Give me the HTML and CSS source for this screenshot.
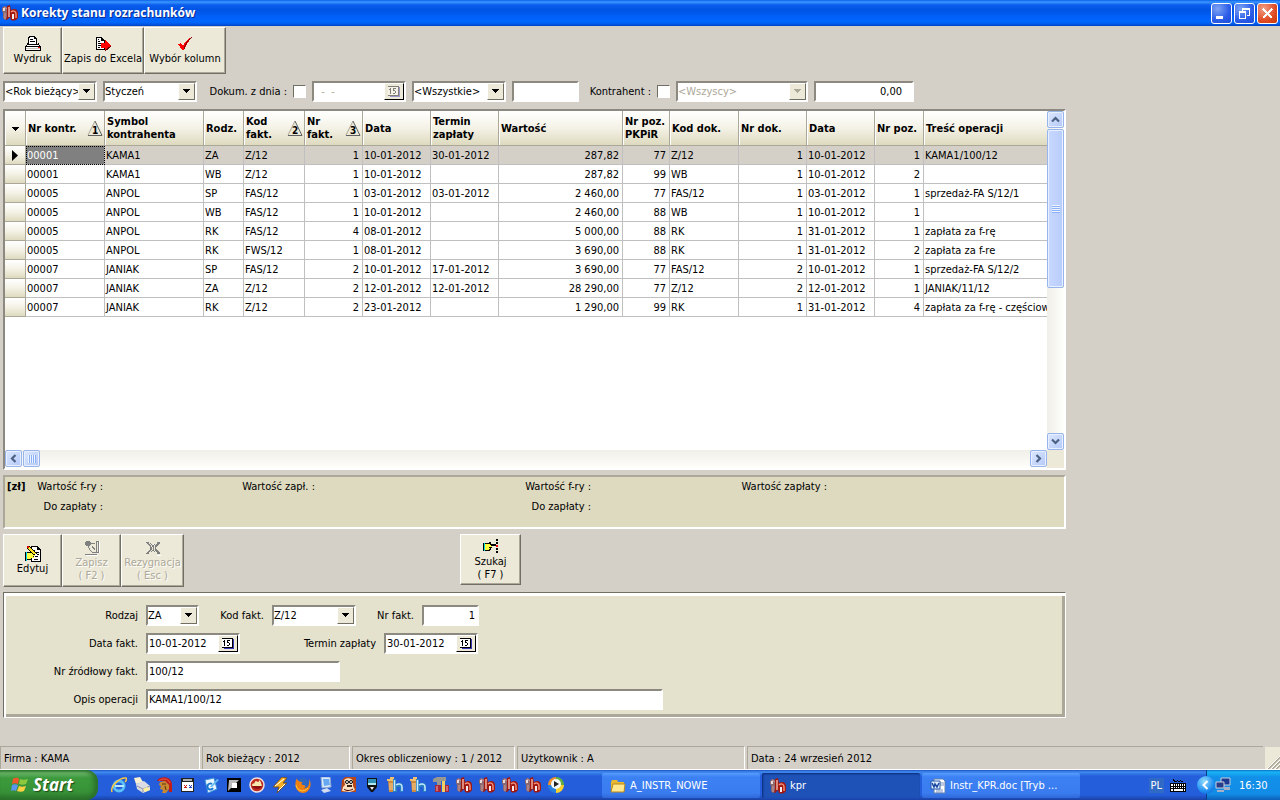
FILE: index.html
```html
<!DOCTYPE html>
<html lang="pl">
<head>
  <meta charset="UTF-8">
  <title>Korekty stanu rozrachunków</title>
  <link rel="stylesheet" href="styles.css">
</head>
<body>
  <svg class="defs" aria-hidden="true">
    <symbol id="i-kpr" viewBox="0 0 16 16">
      <path d="M0 3l2-2 3 1 1 3-1 3v6l-2 1-2-2V8L0 6z" fill="#8c6a70"/>
      <path d="M1 3h2v3H1z" fill="#e8dcdc"/>
      <path d="M3 8v6M2 2l3 2" stroke="#d09898" fill="none"/>
      <path d="M5 1l3-1 1 5c3-2 7-1 7 3v5c-2 3-5 3-7 2l-1-3-3 3H4l1-4z" fill="#a01810"/>
      <path d="M7 2v10" stroke="#f0b0a0" stroke-width="1.500"/>
      <path d="M9 7c2-2 5-1 5 2v4" fill="none" stroke="#f08c78" stroke-width="1.500"/>
      <path d="M10 9h2v5h-2z" fill="#f4ecec"/>
    </symbol>
    <symbol id="i-bh" viewBox="0 0 16 16">
      <path d="M1 3h8l-1 12H2z" fill="#d08a3c"/>
      <path d="M0 2h9v2H0zM3 0h4v2H3z" fill="#f0c070"/>
      <path d="M3 6v7M5 6v7" stroke="#f5cf94"/>
      <path d="M6 2h3v5c3-2 7-2 7 2v6h-3v-5h-3v5H6z" fill="#2a7fc0"/>
      <path d="M7.500 3v11M9 8c3-2 6-1 6 2v4" fill="none" stroke="#c8ecff" stroke-width="1.500"/>
    </symbol>
    <symbol id="i-cal" viewBox="0 0 14 13">
      <path d="M3 2h10v10H3z" fill="#3838b8"/>
      <path d="M1 1h10v9H1z" fill="#fff"/>
      <path d="M1 1h11v1H1zM1 10h11v1H1zM11 1h1v10h-1z" fill="#000"/>
      <path d="M3 3h1v6H3zM2 4h1v1H2zM6 3h3v1H6zM6 4h1v1H6zM6 5h2v1H6zM8 6h1v2H8zM6 8h2v1H6z" fill="#000"/>
    </symbol>
    <symbol id="i-down" viewBox="0 0 7 5"><path d="M0 0h7v1H0zM1 1h5v1H1zM2 2h3v1H2zM3 3h1v1H3z" fill="currentColor"/></symbol>
    <symbol id="i-chev" viewBox="0 0 9 9"><path d="M1 6.500L4.500 3L8 6.500" fill="none" stroke="#4d6185" stroke-width="2.200"/></symbol>
    <symbol id="i-tri" viewBox="0 0 16 17">
      <path d="M8 1L1 15h14z" fill="#ece9d8"/>
      <path d="M8 1L1 15" fill="none" stroke="#aca899"/>
      <path d="M8 1l7 14.500H1" fill="none" stroke="#606060"/>
    </symbol>
  </svg>

  <header class="titlebar">
    <svg class="ico"><use href="#i-kpr"/></svg>
    <h1>Korekty stanu rozrachunków</h1>
    <div class="win-buttons">
      <button class="win-btn" aria-label="Minimalizuj"><svg viewBox="0 0 19 19"><path d="M4 12h7v3H4z" fill="#fff"/></svg></button>
      <button class="win-btn" aria-label="Przywróć"><svg viewBox="0 0 19 19"><path d="M7 4h8v2H7zM14 6h1v6h-1zM12 11h2v1h-2zM7 6h1v1H7zM4 7h7v2H4zM4 9h1v6H4zM10 9h1v6h-1zM4 14h7v1H4z" fill="#fff"/></svg></button>
      <button class="win-btn win-close" aria-label="Zamknij"><svg viewBox="0 0 19 19"><path d="M5 5l9 9M14 5l-9 9" stroke="#fff" stroke-width="2.400"/></svg></button>
    </div>
  </header>

  <main>
    <div class="toolbar">
      <button class="tool t-small">
        <svg class="ico" viewBox="0 0 16 16"><path d="M4 0h6v1h1v1h1v6H3V1h1z" fill="#000"/><path d="M5 1h4v2h2v5H4V2h1z" fill="#fff"/><path d="M5 3h3v1H5zM5 5h5v1H5zM9 2h1v1H9z" fill="#000"/><path d="M2 7h1v1h10V7h1v2h1v1h1v5H0v-5h1V9h1z" fill="#000"/><path d="M2 9h12v1H2zM1 11h14v1H1zM1 13h14v1H1z" fill="#fff"/><path d="M1 12h14v1H1z" fill="#c8c4b8"/><path d="M13 11h2v1h-2z" fill="#f00"/></svg>
        Wydruk
      </button>
      <button class="tool t-wide">
        <svg class="ico" viewBox="0 0 16 16"><path d="M1 1h6v1h1v1h1v1h1v10H1z" fill="#000"/><path d="M2 2h4v3h3v8H2z" fill="#fff"/><path d="M3 3h1v1H3zM3 5h2v1H3zM3 7h3v1H3zM3 9h3v1H3zM3 11h2v1H3zM7 3h1v1H7z" fill="#000"/><path d="M6 7h4V4l6 6-6 5v-3H6z" fill="#f00"/><path d="M16 10l-6 5" stroke="#600"/></svg>
        Zapis do Excela
      </button>
      <button class="tool t-wide">
        <svg class="ico" viewBox="0 0 16 16"><path d="M1 8l3-1 2 3c2-4 5-8 9-9-3 3-6 8-8 13H5z" fill="#f00"/><path d="M15 1C10 5 8 9 7 13" stroke="#800" fill="none"/></svg>
        Wybór kolumn
      </button>
    </div>

    <form class="filters">
      <div class="combo c-std"><select aria-label="Rok"><option>&lt;Rok bieżący&gt;</option></select><span class="drop"><svg><use href="#i-down"/></svg></span></div>
      <div class="combo c-std"><select aria-label="Miesiąc"><option>Styczeń</option></select><span class="drop"><svg><use href="#i-down"/></svg></span></div>
      <label class="l-date" for="fDate">Dokum. z dnia :</label>
      <input type="checkbox" id="fDate">
      <div class="datebox off"><input type="text" value="  -  -" aria-label="Data dokumentu" disabled><button type="button" aria-label="Kalendarz" disabled><svg><use href="#i-cal"/></svg></button></div>
      <div class="combo c-std"><select aria-label="Rodzaj dokumentu"><option>&lt;Wszystkie&gt;</option></select><span class="drop"><svg><use href="#i-down"/></svg></span></div>
      <input class="field f-doc" type="text" aria-label="Numer dokumentu">
      <label class="l-contr" for="fContr">Kontrahent :</label>
      <input type="checkbox" id="fContr">
      <div class="combo c-contr off"><select aria-label="Kontrahent" disabled><option>&lt;Wszyscy&gt;</option></select><span class="drop"><svg><use href="#i-down"/></svg></span></div>
      <input class="field f-sum" type="text" value="0,00" aria-label="Kwota">
    </form>

    <section class="gridbox">
      <div class="grid-view">
        <table>
          <colgroup>
            <col class="w21"><col class="w79"><col class="w99"><col class="w40"><col class="w61"><col class="w58"><col class="w68"><col class="w68"><col class="w124"><col class="w47"><col class="w69"><col class="w68"><col class="w68"><col class="w49"><col>
          </colgroup>
          <thead>
            <tr>
              <th class="pick"><svg><use href="#i-down"/></svg></th>
              <th><div class="sort"><span>Nr kontr.</span><svg><use href="#i-tri"/><text x="5" y="14">1</text></svg></div></th>
              <th>Symbol<br>kontrahenta</th>
              <th>Rodz.</th>
              <th><div class="sort"><span>Kod<br>fakt.</span><svg><use href="#i-tri"/><text x="5" y="14">2</text></svg></div></th>
              <th><div class="sort"><span>Nr<br>fakt.</span><svg><use href="#i-tri"/><text x="5" y="14">3</text></svg></div></th>
              <th>Data</th>
              <th>Termin<br>zapłaty</th>
              <th>Wartość</th>
              <th>Nr poz.<br>PKPiR</th>
              <th>Kod dok.</th>
              <th>Nr dok.</th>
              <th>Data</th>
              <th>Nr poz.</th>
              <th>Treść operacji</th>
            </tr>
          </thead>
          <tbody>
            <tr class="current"><td class="pick"><svg viewBox="0 0 6 11"><path d="M0 0l6 5.500-6 5.500z"/></svg></td><td class="focus">00001</td><td>KAMA1</td><td>ZA</td><td>Z/12</td><td class="num">1</td><td>10-01-2012</td><td>30-01-2012</td><td class="num">287,82</td><td class="num">77</td><td>Z/12</td><td class="num">1</td><td>10-01-2012</td><td class="num">1</td><td>KAMA1/100/12</td></tr>
            <tr><td class="pick"></td><td>00001</td><td>KAMA1</td><td>WB</td><td>Z/12</td><td class="num">1</td><td>10-01-2012</td><td></td><td class="num">287,82</td><td class="num">99</td><td>WB</td><td class="num">1</td><td>10-01-2012</td><td class="num">2</td><td></td></tr>
            <tr><td class="pick"></td><td>00005</td><td>ANPOL</td><td>SP</td><td>FAS/12</td><td class="num">1</td><td>03-01-2012</td><td>03-01-2012</td><td class="num">2 460,00</td><td class="num">77</td><td>FAS/12</td><td class="num">1</td><td>03-01-2012</td><td class="num">1</td><td>sprzedaż-FA S/12/1</td></tr>
            <tr><td class="pick"></td><td>00005</td><td>ANPOL</td><td>WB</td><td>FAS/12</td><td class="num">1</td><td>10-01-2012</td><td></td><td class="num">2 460,00</td><td class="num">88</td><td>WB</td><td class="num">1</td><td>10-01-2012</td><td class="num">1</td><td></td></tr>
            <tr><td class="pick"></td><td>00005</td><td>ANPOL</td><td>RK</td><td>FAS/12</td><td class="num">4</td><td>08-01-2012</td><td></td><td class="num">5 000,00</td><td class="num">88</td><td>RK</td><td class="num">1</td><td>31-01-2012</td><td class="num">1</td><td>zapłata za f-rę</td></tr>
            <tr><td class="pick"></td><td>00005</td><td>ANPOL</td><td>RK</td><td>FWS/12</td><td class="num">1</td><td>08-01-2012</td><td></td><td class="num">3 690,00</td><td class="num">88</td><td>RK</td><td class="num">1</td><td>31-01-2012</td><td class="num">2</td><td>zapłata za f-re</td></tr>
            <tr><td class="pick"></td><td>00007</td><td>JANIAK</td><td>SP</td><td>FAS/12</td><td class="num">2</td><td>10-01-2012</td><td>17-01-2012</td><td class="num">3 690,00</td><td class="num">77</td><td>FAS/12</td><td class="num">2</td><td>10-01-2012</td><td class="num">1</td><td>sprzedaż-FA S/12/2</td></tr>
            <tr><td class="pick"></td><td>00007</td><td>JANIAK</td><td>ZA</td><td>Z/12</td><td class="num">2</td><td>12-01-2012</td><td>12-01-2012</td><td class="num">28 290,00</td><td class="num">77</td><td>Z/12</td><td class="num">2</td><td>12-01-2012</td><td class="num">1</td><td>JANIAK/11/12</td></tr>
            <tr><td class="pick"></td><td>00007</td><td>JANIAK</td><td>RK</td><td>Z/12</td><td class="num">2</td><td>23-01-2012</td><td></td><td class="num">1 290,00</td><td class="num">99</td><td>RK</td><td class="num">1</td><td>31-01-2012</td><td class="num">4</td><td>zapłata za f-rę - częściow</td></tr>
          </tbody>
        </table>
      </div>
      <div class="vscroll">
        <button class="sb" aria-label="W górę"><svg><use href="#i-chev"/></svg></button>
        <div class="thumb"><svg viewBox="0 0 8 8"><path d="M0 0h8v1H0zM0 2h8v1H0zM0 4h8v1H0zM0 6h8v1H0z" fill="#eef4fe"/><path d="M0 1h8v1H0zM0 3h8v1H0zM0 5h8v1H0zM0 7h8v1H0z" fill="#8cb0f8"/></svg></div>
        <button class="sb sb-end" aria-label="W dół"><svg class="r180"><use href="#i-chev"/></svg></button>
      </div>
      <div class="hscroll">
        <button class="sb" aria-label="W lewo"><svg class="r270"><use href="#i-chev"/></svg></button>
        <div class="thumb"><svg viewBox="0 0 8 8"><path d="M0 0v8h1V0zM2 0v8h1V0zM4 0v8h1V0zM6 0v8h1V0z" fill="#eef4fe"/><path d="M1 0v8h1V0zM3 0v8h1V0zM5 0v8h1V0zM7 0v8h1V0z" fill="#8cb0f8"/></svg></div>
        <button class="sb sb-end" aria-label="W prawo"><svg class="r90"><use href="#i-chev"/></svg></button>
      </div>
    </section>

    <section class="summary">
      <b>[zł]</b>
      <span>Wartość f-ry :<br>Do zapłaty :</span>
      <span>Wartość zapł. :</span>
      <span>Wartość f-ry :<br>Do zapłaty :</span>
      <span>Wartość zapłaty :</span>
    </section>

    <div class="actions">
      <button class="tool t-small">
        <svg class="ico" viewBox="0 0 16 16"><path d="M6 0h7v1h1v1h1v1h1v13H6z" fill="#000"/><path d="M7 1h5v3h3v11H7z" fill="#fff"/><path d="M8 4h2v1H8zM11 6h3v1h-3zM12 8h2v1h-2zM10 10h3v1h-3zM9 13h4v1H9zM13 2h1v1h-1z" fill="#000"/><path d="M1 6h3l2-1h3v1h3v2h-2v2h-1v2H7v2H1z" fill="#000"/><path d="M2 7h3l1-1h2v1h3v1H9v1h1v1H8v1h1v1H6v1H2z" fill="#ffff40"/><path d="M0 6h2v9H0z" fill="#00d8e8"/><path d="M0 6h1v9H0z" fill="#000"/><path d="M3 1l7 7" stroke="#000" stroke-width="3"/><path d="M4 2l6 6" stroke="#ffe020" stroke-width="1.500"/><path d="M2 0h2v2H2z" fill="#e00000"/></svg>
        Edytuj
      </button>
      <button class="tool t-small" disabled>
        <svg class="ico" viewBox="0 0 16 16"><path d="M2 1h4v1h1v2L5 6H2L1 5V2z" fill="#808080"/><path d="M6 4l5-1M12 1h2v11h-2M4 6l2 4 2 2h4M8 6l3 4M12 2v10" fill="none" stroke="#808080"/><path d="M1 14h12v1H1z" fill="#808080"/><path d="M2 15h12v1H2zM15 1h1v12h-1z" fill="#fff"/></svg>
        Zapisz<br>( F2 )
      </button>
      <button class="tool t-cancel" disabled>
        <svg class="ico" viewBox="0 0 16 16"><path d="M3 15l3-3M12 15h4M8 4v2" stroke="#fff" fill="none"/><path d="M1 2h4l3 4 3-4h4v1l-4 4v2l4 4v1h-4l-3-4-3 4H1v-1l4-4V7L1 3z" fill="#808080"/><path d="M4 2l3 5v3l-4 5M12 2L9 7v3l4 5" stroke="#ece9d8" fill="none"/></svg>
        Rezygnacja<br>( Esc )
      </button>
      <button class="tool t-find">
        <svg class="ico" viewBox="0 0 16 16"><path d="M1 4h4l2-1h1v2h5v2H9v2H8v2H7v1H1z" fill="#000"/><path d="M2 5h4l1-1v2h5v0H8v1h1v1H6v1h1v1H6v1H2z" fill="#ffff40"/><path d="M1 4h1v8H1z" fill="#00d8e8"/><path d="M0 4h1v8H0z" fill="#000"/><path d="M13 0h2v2h-2zM13 3h2v2h-2zM13 9h2v2h-2zM13 12h2v2h-2z" fill="#000"/><path d="M13 6h2v2h-2z" fill="#f00"/></svg>
        Szukaj<br>( F7 )
      </button>
    </div>

    <form class="details">
      <div class="row">
        <label class="l-first" for="kind">Rodzaj</label>
        <div class="combo d-kind"><select id="kind"><option>ZA</option></select><span class="drop"><svg><use href="#i-down"/></svg></span></div>
        <label class="l-code" for="code">Kod fakt.</label>
        <div class="combo d-code"><select id="code"><option>Z/12</option></select><span class="drop"><svg><use href="#i-down"/></svg></span></div>
        <label class="l-nr" for="nr">Nr fakt.</label>
        <input class="field d-nr" id="nr" type="text" value="1">
      </div>
      <div class="row">
        <label class="l-first" for="issued">Data fakt.</label>
        <div class="datebox"><input id="issued" type="text" value="10-01-2012"><button type="button" aria-label="Kalendarz"><svg><use href="#i-cal"/></svg></button></div>
        <label class="l-due" for="due">Termin zapłaty</label>
        <div class="datebox"><input id="due" type="text" value="30-01-2012"><button type="button" aria-label="Kalendarz"><svg><use href="#i-cal"/></svg></button></div>
      </div>
      <div class="row">
        <label class="l-first" for="source">Nr źródłowy fakt.</label>
        <input class="field d-source" id="source" type="text" value="100/12">
      </div>
      <div class="row">
        <label class="l-first" for="descr">Opis operacji</label>
        <input class="field d-descr" id="descr" type="text" value="KAMA1/100/12">
      </div>
    </form>
  </main>

  <footer class="status">
    <span class="st-firm">Firma : KAMA</span>
    <span class="st-year">Rok bieżący : 2012</span>
    <span class="st-period">Okres obliczeniowy : 1 / 2012</span>
    <span class="st-user">Użytkownik : A</span>
    <span class="st-date">Data : 24 wrzesień 2012</span>
    <svg class="grip" viewBox="0 0 15 22"><path d="M0 0h15v22H0z" fill="#ece9d8"/><path d="M3 22L15 10M7 22l8-8M11 22l4-4" stroke="#aca899" stroke-width="2"/><path d="M2 22L15 9M6 22l9-9M10 22l5-5" stroke="#fff"/></svg>
  </footer>

  <nav class="taskbar">
    <button class="start">
      <svg viewBox="0 0 18 18"><path d="M2 3c3-2 5-1 6 0L7 8C5 7 3 7 1 8z" fill="#f0582a"/><path d="M9 3c2 1 5 1 8 0l-2 5c-2 1-5 1-7 0z" fill="#8cc840"/><path d="M1 9c2-1 4-1 6 0l-2 6c-2-1-3-1-5 0z" fill="#5a96f0"/><path d="M8 10c2 1 4 1 7 0l-2 5c-2 1-5 1-7 0z" fill="#fcd040"/></svg>
      Start
    </button>
    <div class="quick">
      <a href="#" aria-label="Internet Explorer"><svg viewBox="0 0 16 16"><circle cx="8" cy="9" r="5" fill="none" stroke="#5cc0f8" stroke-width="3"/><path d="M4 9h9" stroke="#b8e8ff" stroke-width="2"/><path d="M1 15C-1 9 9 0 15 1c1 1 0 3-1 4" fill="none" stroke="#f8c840" stroke-width="1.500"/></svg></a>
      <a href="#" aria-label="Drukarka"><svg viewBox="0 0 16 16"><path d="M0 1l6-1 3 5-7 2z" fill="#f8f0d0"/><path d="M2 7l8-3 6 5v4l-7 3-6-4z" fill="#dcdce4"/><path d="M3 9l6 3 7-3M9 12v3" stroke="#8890a0" fill="none"/><path d="M9 12l4-2 3 3-5 2z" fill="#fff0a0"/></svg></a>
      <a href="#" aria-label="Spartan"><svg viewBox="0 0 16 16"><path d="M0 4c2-5 14-6 15 3v8h-3L11 7 6 4z" fill="#c01c18"/><path d="M3 5l5-1 4 4v4l-3 4H5l1-3-3-1 1-3-2-1z" fill="#c88830"/><path d="M5 7h4M8 9l1 4" stroke="#5c3008"/><path d="M2 4c3-3 9-3 11 2" stroke="#f06050" fill="none"/></svg></a>
      <a href="#" aria-label="Kalendarz"><svg viewBox="0 0 16 16"><path d="M1 1h13v14H1z" fill="#222"/><path d="M2 5h11v9H2z" fill="#fff"/><path d="M3 2h9v2H3z" fill="#b0b0b0"/><path d="M4 8h1v1H4zM6 8h1v1H6zM5 9h1v1H5zM4 10h3v1H4z" fill="#d02020"/><path d="M9 8h1v1H9zM11 8h1v1h-1zM10 9h1v1h-1zM9 10h3v1H9z" fill="#2040c0"/></svg></a>
      <a href="#" aria-label="Poczta"><svg viewBox="0 0 16 16"><path d="M2 3l9-2 3 11-9 4z" fill="#eaf6ff" stroke="#3a90d8"/><path d="M9 7a3 3 0 1 0 1 4" fill="none" stroke="#1878d0" stroke-width="2"/><path d="M7 10l7-8 2 1-7 7z" fill="#60b8f0"/></svg></a>
      <a href="#" aria-label="Total"><svg viewBox="0 0 16 16"><path d="M1 1h14v14H1z" fill="#000"/><path d="M3 3h10l-3 3v5H5l-3 3z" fill="#bbb"/><path d="M6 6h5v5H6z" fill="#fff"/></svg></a>
      <a href="#" aria-label="Nero"><svg viewBox="0 0 16 16"><circle cx="8" cy="8" r="7" fill="#c02c20" stroke="#f0e0e0" stroke-width="1.500"/><path d="M3 8c1-3 2 0 3-3s3 2 4-1 2 3 3 4c-1 4-9 4-10 0z" fill="#f8e8b0"/><path d="M3 9h10c-1 4-9 4-10 0z" fill="#901010"/></svg></a>
      <a href="#" aria-label="Winamp"><svg viewBox="0 0 16 16"><path d="M10 0l5 1-4 5h4L5 16l2-6H1z" fill="#f8b020" stroke="#705030"/><path d="M3 9l9-7M6 14l7-7" stroke="#fff"/></svg></a>
      <a href="#" aria-label="Firefox"><svg viewBox="0 0 16 16"><circle cx="8" cy="7" r="6" fill="#3068c0"/><path d="M2 1c-4 8 0 15 6 15s10-8 6-14c1 7-2 10-5 9 2-1 2-2 0-3-3 0-3-2-1-3-3 0-6-1-6-4z" fill="#f08010"/><path d="M1 8c1 6 8 8 12 3" stroke="#ffd040" fill="none"/></svg></a>
      <a href="#" aria-label="Pulpit"><svg viewBox="0 0 16 16"><path d="M3 0h9l1 10-9 1z" fill="#d8ecff" stroke="#90a8d0"/><path d="M5 2h6l1 6-6 1z" fill="#68a8f0"/><path d="M3 13l6-2 4 3-7 2z" fill="#d0dcf0"/></svg></a>
      <a href="#" aria-label="Gimp"><svg viewBox="0 0 16 16"><path d="M1 3l3-3h11v15H0z" fill="#b84818"/><path d="M3 3c3-3 8-2 9 1v5l2 4-5 2-8-1 1-4 2-2z" fill="#f8e0c0"/><circle cx="6" cy="5" r="1.500" fill="#fff" stroke="#000"/><circle cx="10" cy="5" r="1.500" fill="#fff" stroke="#000"/><path d="M6 8h5v2H6z" fill="#402010"/><path d="M3 12c2 2 6 2 9 0" stroke="#400" fill="none"/></svg></a>
      <a href="#" aria-label="Pióro"><svg viewBox="0 0 16 16"><path d="M3 1h10v9l-4 5H7l-4-5z" fill="#111"/><path d="M4 2h8v4H4z" fill="#3090b8"/><path d="M4 6h8v2H4z" fill="#b0e8f0"/><path d="M6 10h4l-2 3z" fill="#eee"/></svg></a>
      <a href="#" aria-label="BH 1"><svg><use href="#i-bh"/></svg></a>
      <a href="#" aria-label="BH 2"><svg><use href="#i-bh"/></svg></a>
      <a href="#" aria-label="Narzędzia"><svg viewBox="0 0 16 16"><path d="M0 2l4-2h9v4H8v10H4V5H0z" fill="#989890"/><path d="M2 8h6v7H2zM10 8h6v7h-6z" fill="#a82838"/><path d="M9 4h3v11H9z" fill="#f0d060"/><path d="M4 9v5M14 9v5" stroke="#f0b0b0"/></svg></a>
      <a href="#" aria-label="KPR 1"><svg><use href="#i-kpr"/></svg></a>
      <a href="#" aria-label="KPR 2"><svg><use href="#i-kpr"/></svg></a>
      <a href="#" aria-label="KPR 3"><svg><use href="#i-kpr"/></svg></a>
      <a href="#" aria-label="KPR 4"><svg><use href="#i-kpr"/></svg></a>
      <a href="#" aria-label="Odtwarzacz"><svg viewBox="0 0 16 16"><path d="M8 0a8 8 0 0 0-8 8h8z" fill="#f09028"/><path d="M8 0a8 8 0 0 1 8 8H8z" fill="#60b040"/><path d="M16 8a8 8 0 0 1-8 8V8z" fill="#f8d030"/><path d="M0 8a8 8 0 0 0 8 8V8z" fill="#2880e0"/><circle cx="8" cy="7" r="5" fill="#f4f8fc"/><path d="M6 4l5 3-5 3z" fill="#222"/></svg></a>
    </div>
    <div class="tasks">
      <button class="task"><svg class="ico" viewBox="0 0 16 16"><path d="M1 4l1-2h5l1 2h6v10H1z" fill="#e8b830"/><path d="M3 6h12l-1 8H1z" fill="#ffe890" stroke="#b88818"/></svg>A_INSTR_NOWE</button>
      <button class="task active"><svg class="ico"><use href="#i-kpr"/></svg>kpr</button>
      <button class="task"><svg class="ico" viewBox="0 0 16 16"><path d="M4 1h9l2 2v12H4z" fill="#fff" stroke="#6080b0"/><path d="M10 5h4M10 7h4M6 12h7M6 14h7" stroke="#7890c0"/><path d="M1 3h9v8H1z" fill="#e0ecff" stroke="#2858a8"/><path d="M2 5l2 4 1-3 2 3 2-4" fill="none" stroke="#1848a0" stroke-width="1.500"/></svg>Instr_KPR.doc [Tryb ...</button>
    </div>
    <div class="lang">
      <span>PL</span>
      <svg class="ico crisp" viewBox="0 0 16 16"><path d="M3 2h1v1h1v1h2V3h1v1h2V3h1v1h2v1h-2V4h-1v1H8V4H7v1H4V4H3zM0 6h16v9H0z" fill="#000"/><path d="M1 7h14v7H1z" fill="#fff"/><path d="M1 9h14v1H1zM1 11h14v1H1zM3 7h1v7H3zM5 7h1v5H5zM7 7h1v5H7zM9 7h1v5H9zM11 7h1v5h-1zM13 7h1v7h-1z" fill="#000"/></svg>
    </div>
    <div class="tray">
      <button class="expand" aria-label="Pokaż ukryte ikony"><svg viewBox="0 0 18 18"><path d="M10.500 5l-4 4 4 4" fill="none" stroke="#fff" stroke-width="2"/></svg></button>
      <svg class="ico" viewBox="0 0 16 16"><path d="M6 1h9v7H6z" fill="#1c3890" stroke="#c8d0e0"/><path d="M1 5h8v6H1z" fill="#283c88" stroke="#c8d0e0"/><path d="M9 10h6v3H9zM2 13h7v2H2z" fill="#a8b0c8"/></svg>
      <time>16:30</time>
    </div>
  </nav>
</body>
</html>
```
FILE: styles.css
```css
:root {
  --face: #d4d0c8;
  --cream: #ece9d8;
  --shade: #aca899;
  --dark: #716f64;
  --grid: #c0c0c0;
}

* {
  box-sizing: border-box;
}

body {
  margin: 0;
  min-height: 100vh;
  display: flex;
  flex-direction: column;
  background: var(--face);
  color: #000;
  font: 11px/13px "DejaVu Sans Condensed", "Liberation Sans", sans-serif;
  overflow-x: hidden;
}

button, input, select {
  font: inherit;
  color: inherit;
  margin: 0;
  padding: 0;
  border: 0;
  border-radius: 0;
  outline: 0;
}

.defs {
  display: none;
}

.ico {
  width: 16px;
  height: 16px;
  flex: none;
}

.tool .ico, .crisp, .datebox svg, .win-btn svg, .drop svg {
  shape-rendering: crispEdges;
}

/* title bar */
.titlebar {
  height: 26px;
  display: flex;
  align-items: center;
  gap: 3px;
  padding: 0 2px;
  background: linear-gradient(#0a62e8 0, #3c96ff 2px, #0a5cec 5px, #0054e3 10px, #0060fa 17px, #0068ff 22px, #0050d8 25px, #0040c0 26px);
}

.titlebar h1 {
  margin: 0;
  flex: 1;
  color: #fff;
  font: bold 12px/16px "Open Sans", sans-serif;
  text-shadow: 1px 1px 0 #0a2a90;
}

.win-buttons {
  display: flex;
  gap: 2px;
}

.win-btn {
  width: 21px;
  height: 21px;
  border: 1px solid #fff;
  border-radius: 3px;
  background: radial-gradient(circle at 30% 25%, #7ea4f4, #2a5ce8 60%, #1c4cd8);
}

.win-btn svg {
  display: block;
  width: 19px;
  height: 19px;
}

.win-close {
  background: radial-gradient(circle at 30% 25%, #f0a088, #e04c24 60%, #c83808);
}

/* work area */
main {
  flex: 1;
  display: flex;
  flex-direction: column;
  width: 100%;
  max-width: 1069px;
  padding: 1px 3px 28px;
}

.toolbar {
  display: flex;
}

.tool {
  display: flex;
  flex-direction: column;
  align-items: center;
  justify-content: center;
  background: var(--cream);
  border: 1px solid;
  border-color: #fff var(--dark) var(--dark) #fff;
  box-shadow: inset -1px -1px 0 var(--shade);
  white-space: nowrap;
}

.toolbar .tool {
  height: 47px;
}

.tool:disabled {
  color: var(--shade);
  text-shadow: 1px 1px 0 #fff;
}

.t-small { width: 59px; }
.t-wide { width: 82px; }
.t-cancel { width: 63px; }

/* sunken controls */
.field, .combo, .datebox {
  height: 21px;
  background: #fff;
  border: 2px solid;
  border-color: #8c8a80 #fff #fff #8c8a80;
}

.field {
  padding: 0 2px 0 1px;
}

.combo {
  display: grid;
  grid-template-columns: minmax(0, 1fr);
}

.combo select {
  grid-area: 1 / 1;
  width: 100%;
  height: 17px;
  background: #fff;
  appearance: none;
}

.drop {
  grid-area: 1 / 1;
  justify-self: end;
  width: 17px;
  height: 17px;
  display: flex;
  align-items: center;
  justify-content: center;
  pointer-events: none;
  background: var(--cream);
  border: 1px solid;
  border-color: #fff var(--dark) var(--dark) #fff;
}

.drop svg, th.pick svg {
  width: 7px;
  height: 5px;
}

.datebox {
  display: flex;
  width: 94px;
}

.datebox input {
  flex: 1;
  min-width: 0;
  padding-left: 1px;
  background: #fff;
  white-space: pre;
}

.datebox button {
  width: 20px;
  display: flex;
  align-items: center;
  justify-content: center;
  background: var(--cream);
  border: 1px solid;
  border-color: #fff #000 #000 #fff;
}

.datebox svg {
  width: 14px;
  height: 13px;
}

.off, .off select, .off input {
  color: var(--shade);
  opacity: 1;
}

.off button svg {
  opacity: .45;
}

/* filters */
.filters {
  display: flex;
  align-items: center;
  gap: 6px;
  margin-top: 7px;
}

.filters label {
  text-align: right;
  white-space: nowrap;
}

.filters input[type="checkbox"] {
  appearance: none;
  width: 13px;
  height: 13px;
  background: #fff;
  border: 1px solid;
  border-color: var(--dark) #fff #fff var(--dark);
}

.c-std { width: 94px; }
.c-contr { width: 132px; }
.l-date { width: 84px; }
.l-contr { width: 66px; }
.f-doc { width: 67px; }

.f-sum {
  width: 100px;
  padding-right: 10px;
  text-align: right;
}

/* data grid */
.gridbox {
  flex: 1;
  min-height: 240px;
  margin-top: 7px;
  display: grid;
  grid-template-columns: minmax(0, 1fr) 17px;
  grid-template-rows: minmax(0, 1fr) 18px;
  background: var(--cream);
  border: 2px solid;
  border-color: #8c8a80 #fff #fff #8c8a80;
}

.grid-view {
  overflow: hidden;
  background: #fff;
}

table {
  width: 100%;
  table-layout: fixed;
  border-collapse: separate;
  border-spacing: 0;
}

.w21 { width: 21px; }
.w40 { width: 40px; }
.w47 { width: 47px; }
.w49 { width: 49px; }
.w58 { width: 58px; }
.w61 { width: 61px; }
.w68 { width: 68px; }
.w69 { width: 69px; }
.w79 { width: 79px; }
.w99 { width: 99px; }
.w124 { width: 124px; }

th, td {
  overflow: hidden;
  white-space: nowrap;
  text-align: left;
}

th {
  height: 35px;
  padding: 0 0 0 2px;
  background: linear-gradient(#fff, #f4f2e6 50%, #dedabf);
  border-right: 1px solid var(--shade);
  border-bottom: 1px solid var(--shade);
  box-shadow: inset 1px 0 0 #fff;
}

td {
  height: 19px;
  padding: 0 3px 0 1px;
  border-right: 1px solid var(--grid);
  border-bottom: 1px solid var(--grid);
}

tr > :last-child {
  padding-right: 0;
  border-right: 0;
}

.num {
  text-align: right;
}

td.pick {
  padding: 0 0 0 7px;
  background: linear-gradient(#fff, #f4f2e6 50%, #dedabf);
  border-color: var(--shade);
}

td.pick svg {
  display: block;
  width: 6px;
  height: 11px;
}

th.pick {
  padding: 0;
  text-align: center;
}

.current td {
  background-color: var(--face);
}

.current .focus {
  color: #fff;
  background: #808080;
  outline: 1px dotted #000;
  outline-offset: -1px;
}

.sort {
  display: flex;
  align-items: center;
  justify-content: space-between;
  padding-right: 1px;
}

.sort svg {
  width: 16px;
  height: 17px;
}

.sort text {
  font-size: 10px;
  font-weight: bold;
}

/* scroll bars */
.vscroll, .hscroll {
  display: flex;
  gap: 1px;
  background: linear-gradient(90deg, #f0efe8, #fefefb);
}

.vscroll {
  flex-direction: column;
}

.hscroll {
  background: linear-gradient(#f0efe8, #fefefb);
}

.sb, .thumb {
  display: flex;
  align-items: center;
  justify-content: center;
  width: 17px;
  height: 17px;
  background: linear-gradient(135deg, #dce8ff, #b4c8f8);
  border: 1px solid #98b4ec;
  border-radius: 2px;
  box-shadow: inset 0 0 0 1px #e8f0ff;
}

.sb svg {
  width: 9px;
  height: 9px;
}

.thumb svg {
  width: 8px;
  height: 8px;
}

.vscroll .thumb {
  height: 47%;
  background: linear-gradient(90deg, #c8d8ff, #b8ccfa);
}

.vscroll .sb-end { margin-top: auto; }
.hscroll .sb-end { margin-left: auto; }
.r90 { transform: rotate(90deg); }
.r180 { transform: rotate(180deg); }
.r270 { transform: rotate(270deg); }

/* totals */
.summary {
  display: grid;
  grid-template-columns: 20px 76px 212px 276px 236px;
  min-height: 54px;
  margin-top: 5px;
  padding: 0 2px;
  line-height: 20px;
  background: #dedabf;
  border: 2px solid;
  border-color: var(--shade) #fff #fff var(--shade);
}

.summary span {
  text-align: right;
}

/* actions */
.actions {
  display: flex;
  align-items: flex-start;
  margin-top: 5px;
}

.actions .tool {
  height: 53px;
}

.actions .t-find {
  width: 61px;
  height: 51px;
  margin-left: 276px;
}

/* edited document */
.details {
  display: flex;
  flex-direction: column;
  gap: 7px;
  margin-top: 5px;
  padding: 12px 4px 7px 0;
  background: #e4e1cc;
  border: 1px solid;
  border-color: var(--dark) #fff #fff var(--dark);
  box-shadow: inset 2px 3px 0 #fff, inset -3px -3px 0 var(--shade);
}

.row {
  display: flex;
  align-items: center;
  gap: 8px;
}

.row label {
  text-align: right;
  white-space: nowrap;
}

.l-first { width: 134px; }
.l-code { width: 57px; }
.l-nr { width: 50px; }
.l-due { width: 128px; }
.d-kind { width: 53px; }
.d-code { width: 84px; }
.d-source { width: 194px; }
.d-descr { width: 517px; }

.d-nr {
  width: 57px;
  text-align: right;
}

/* status bar */
.status {
  display: flex;
  gap: 2px;
  height: 24px;
  border-bottom: 1px solid #fff;
}

.status span {
  padding: 5px 3px;
  border-top: 1px solid var(--shade);
  border-left: 1px solid var(--shade);
  border-right: 1px solid #fff;
  white-space: nowrap;
}

.st-firm { width: 200px; }
.st-year { width: 148px; }
.st-period { width: 163px; }
.st-user { width: 228px; }

.status .st-date {
  flex: 1;
  border-right: 0;
}

.grip {
  width: 15px;
  height: 22px;
  align-self: flex-end;
}

/* taskbar */
.taskbar {
  display: flex;
  align-items: stretch;
  height: 30px;
  color: #fff;
  background: linear-gradient(#1f4fc0 0, #3f8cf0 2px, #245edb 6px, #245edb 25px, #1941a5 30px);
}

.start {
  display: flex;
  align-items: center;
  gap: 4px;
  width: 98px;
  padding-left: 11px;
  color: #fff;
  font: italic bold 17px/20px "Open Sans", sans-serif;
  text-shadow: 1px 1px 1px #1c4a18;
  background: linear-gradient(#2f7a30 0, #6ab468 3px, #3c9a3c 8px, #379237 22px, #2a6f2a 30px);
  border-radius: 0 12px 12px 0;
  box-shadow: inset -4px 0 5px #2a6f2a;
}

.start svg {
  width: 18px;
  height: 18px;
}

.quick {
  display: flex;
  align-items: center;
  gap: 7px;
  padding-left: 13px;
}

.quick svg {
  display: block;
  width: 16px;
  height: 16px;
}

.tasks {
  flex: 1;
  display: flex;
  gap: 2px;
  padding: 3px 0 2px 38px;
}

.task {
  display: flex;
  align-items: center;
  gap: 4px;
  width: 158px;
  padding-left: 8px;
  color: #fff;
  white-space: nowrap;
  border-radius: 2px;
  background: linear-gradient(#5a9cff, #3c81f3 4px, #3a7cf0 20px, #2f68d8);
}

.task.active {
  background: #1e52b7;
  box-shadow: inset 1px 1px 2px #0c2c78;
}

.lang {
  display: flex;
  align-items: center;
  gap: 6px;
  padding-right: 20px;
}

.lang span {
  padding: 1px 2px;
  background: #316ac5;
}

.tray {
  display: flex;
  align-items: center;
  width: 74px;
  background: linear-gradient(#0c70c8 0, #18b4f4 2px, #1290e8 7px, #128ce6 24px, #0c60b8 30px);
  border-left: 1px solid #0a3c88;
}

.expand {
  width: 18px;
  height: 18px;
  flex: none;
  margin-left: -10px;
  border-radius: 50%;
  background: radial-gradient(circle at 40% 30%, #90dcff, #1c8cf0 60%, #0c58c0);
}

.expand svg {
  display: block;
  width: 18px;
  height: 18px;
}

.tray time {
  margin-left: 8px;
}
```
